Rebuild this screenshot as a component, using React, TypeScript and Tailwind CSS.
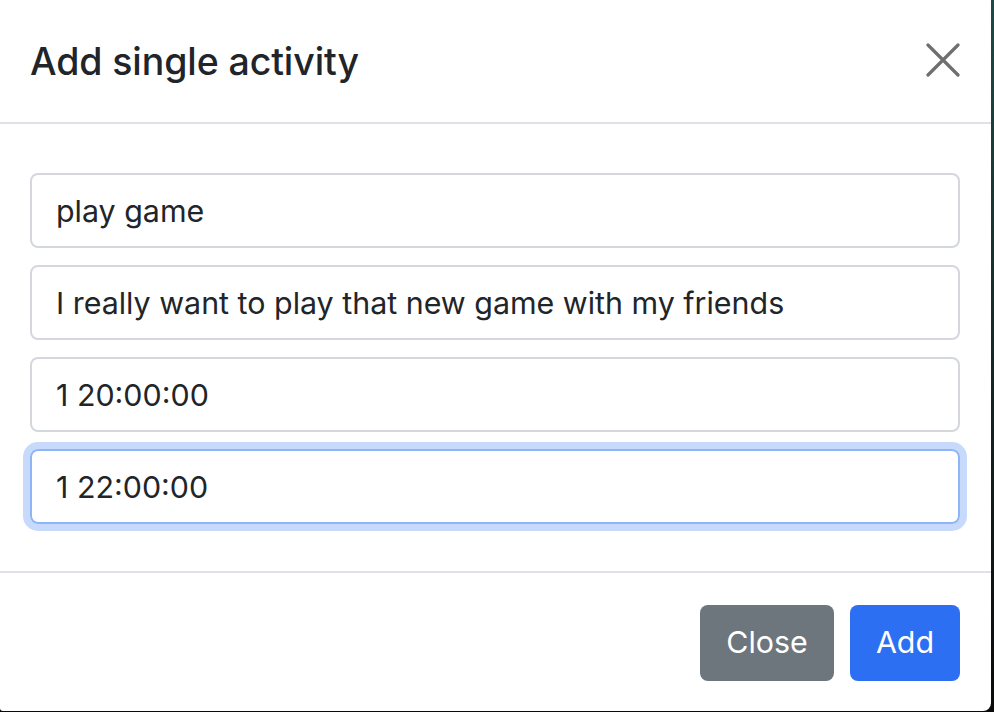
import React from "react";

function CloseIcon() {
  return (
    <svg width="34" height="34" viewBox="0 0 34 34" fill="none">
      <path d="M2 2L32 32M32 2L2 32" stroke="#6f6f6f" strokeWidth="3.2" strokeLinecap="round" />
    </svg>
  );
}

export default function App() {
  const font = { fontFamily: 'Inter, "Liberation Sans", Arial, sans-serif' };
  const inputCls =
    "h-[75px] w-full border-2 border-[#d4d8dc] rounded-[8px] px-[24px] text-[30.4px] text-[#212529] outline-none";
  return (
    <div className="w-[994px] h-[712px] bg-gradient-to-b from-[#1f4a47] to-[#0a0a0a] overflow-hidden" style={font}>
      <div className="w-[991px] h-[711px] bg-white rounded-br-[8px] rounded-bl-[3px] flex flex-col text-[#212529]">
        <div className="h-[124px] border-b-2 border-[#dee2e6] flex items-center justify-between pl-[30px] pr-[31px] shrink-0">
          <h2 className="text-[37.5px] font-medium tracking-[-0.1px] leading-none pt-[2px]">Add single activity</h2>
          <button className="w-[34px] h-[34px] flex items-center justify-center mt-[-2px]">
            <CloseIcon />
          </button>
        </div>
        <div className="pt-[49px] pb-[47px] pl-[30px] pr-[31px] flex flex-col gap-[17px] border-b-2 border-[#dee2e6] shrink-0">
          <input readOnly value="play game" className={inputCls} />
          <input readOnly value="I really want to play that new game with my friends" className={inputCls} />
          <input readOnly value="1 20:00:00" className={inputCls} />
          <input
            readOnly
            value="1 22:00:00"
            className="h-[75px] w-full border-2 border-[#8db5f8] rounded-[8px] px-[24px] text-[30.4px] text-[#212529] outline-none shadow-[0_0_0_7px_#c7dafb]"
          />
        </div>
        <div className="flex-1 flex items-center justify-end gap-[16px] pr-[31px] pt-[2px]">
          <button className="h-[76px] w-[134px] rounded-[8px] bg-[#6d757d] text-white text-[30.4px]">Close</button>
          <button className="h-[76px] w-[110px] rounded-[8px] bg-[#2d6ff3] text-white text-[30.4px]">Add</button>
        </div>
      </div>
    </div>
  );
}
